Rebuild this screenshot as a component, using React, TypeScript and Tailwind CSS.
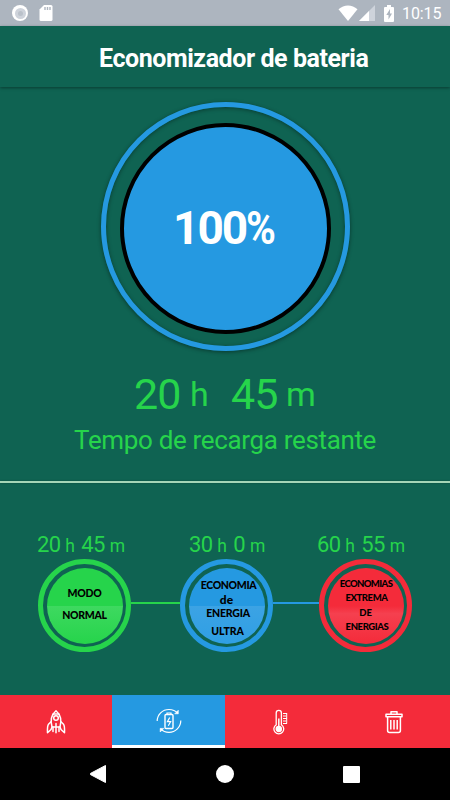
import React from 'react';

type Line = { text: string; cls: string };

function Duration({ h, m, cls }: { h: string; m: string; cls: string }) {
  return (
    <div className={`flex h-[26px] items-baseline whitespace-nowrap text-[22px] leading-[26px] tracking-[-0.7px] text-[#26d44b] ${cls}`}>
      <span>{h}</span>
      <span className="ml-[5px] text-[17.500px]">h</span>
      <span className="ml-[7px]">{m}</span>
      <span className="ml-[5px] text-[17.500px]">m</span>
    </div>
  );
}

function Mode({ ring, disc, lines }: { ring: string; disc: string; lines: Line[] }) {
  return (
    <div className={`flex size-[93px] shrink-0 items-center justify-center rounded-full border-[5px] ${ring}`}>
      <div className={`flex size-[76px] shrink-0 flex-col items-center rounded-full font-[Lato,sans-serif] font-black text-black ${disc}`}>
        {lines.map((l) => (
          <span key={l.text} className={`whitespace-nowrap ${l.cls}`}>{l.text}</span>
        ))}
      </div>
    </div>
  );
}

function Rocket() {
  return (
    <svg width="20" height="26" viewBox="0 0 20 26" fill="none" stroke="#fff" strokeWidth="1.500" strokeLinejoin="round" strokeLinecap="round">
      <path d="M6 18C4.200 11.500 5.400 5.600 10 1.700c4.600 3.900 5.800 9.800 4 16.300Z" />
      <path d="M7.200 5h5.600" />
      <circle cx="10" cy="9" r="2.300" />
      <path d="M5 12.800 2.500 15.200C1.500 16.300 1.300 19 1.500 23.800L5 20.500 6 18M15 12.800l2.500 2.400c1 1.100 1.200 3.800 1 8.600L15 20.500 14 18" />
      <path d="M7 18v4.500M13 18v4.500M10 14.500v9.300" />
    </svg>
  );
}

function Recharge() {
  return (
    <svg width="26" height="26" viewBox="0 0 26 26" fill="none" stroke="#fff" strokeWidth="1.200">
      <path d="M1.200 13C1.200 6.500 6.500 1.500 13 1.500c3.600 0 6.500 1.200 8.800 3.800M24.800 12.500c0 6.500-5.300 11.900-11.800 11.900-3.500 0-6.300-1.300-8.500-3.700" />
      <path d="M22.300 2.200v3.600h-3.600ZM4.200 24v-3.600h3.600Z" fill="#fff" strokeWidth=".6" />
      <rect x="9" y="6.500" width="8" height="14" rx="1" strokeWidth="1.400" />
      <path d="M11 6V5h4v1" />
      <path d="M13.700 9.500l-2.300 4.200h3.200l-2.300 4" />
    </svg>
  );
}

function Thermometer() {
  return (
    <svg width="16" height="26" viewBox="0 0 16 26" fill="none" stroke="#fff" strokeWidth="1.300">
      <path d="M3.200 15.800V4a2.600 2.600 0 0 1 5.200 0v11.800a4.900 4.900 0 1 1-5.200 0Z" />
      <path d="M5.800 9.500V18" strokeWidth="1.500" />
      <circle cx="5.800" cy="20" r="2.600" fill="#fff" />
      <path d="M10 4.500h4M10 7h3M10 9.500h4M10 12h3M10 14.500h4M13.700 4v10.500" strokeWidth="1" />
    </svg>
  );
}

function Trash() {
  return (
    <svg width="18" height="24" viewBox="0 0 18 24" fill="none" stroke="#fff" strokeWidth="1.500" strokeLinejoin="round">
      <path d="M6 4V1.800h6V4M1 4.200h16v2.600H1ZM2.600 7v13.500c0 1.300.7 2 2 2h8.800c1.300 0 2-.7 2-2V7M5.800 10v9.500M9 10v9.500M12.200 10v9.500" />
    </svg>
  );
}

export default function App() {
  return (
    <div className="flex h-[800px] w-[450px] flex-col overflow-hidden bg-[#0f6352] font-[Roboto,sans-serif]">
      <div className="flex h-[26px] shrink-0 items-center bg-[#adb5bf] pl-3 text-white">
        <span className="flex size-4 items-center justify-center rounded-full bg-white">
          <span className="flex size-[11px] items-center justify-center rounded-full bg-[#ced3db]">
            <span className="size-[5px] rounded-full bg-[#bac1ca]" />
          </span>
        </span>
        <svg className="ml-[11px]" width="14" height="16" viewBox="0 0 14 16">
          <path d="M5 0h7a1.500 1.500 0 0 1 1.500 1.500v13A1.500 1.500 0 0 1 12 16H2a1.500 1.500 0 0 1-1.500-1.500V4.500Z" fill="#fff" />
          <path d="M6 2v3M8.500 2v3M11 2v3" stroke="#adb5bf" strokeWidth="1.400" />
        </svg>
        <svg className="ml-[285px]" width="20" height="16" viewBox="0 0 20 16">
          <path d="M.5 4.200C6-.9 14-.9 19.500 4.200L10 16Z" fill="#fff" />
        </svg>
        <svg className="ml-[1px]" width="16" height="16" viewBox="0 0 16 16">
          <path d="M16 0v16H0Z" fill="#ced3db" />
          <path d="M10 6v10H0Z" fill="#fff" />
        </svg>
        <svg className="ml-2" width="12" height="17" viewBox="0 0 12 17">
          <path d="M4 0h4v2h2a1 1 0 0 1 1 1v13a1 1 0 0 1-1 1H2a1 1 0 0 1-1-1V3a1 1 0 0 1 1-1h2Z" fill="#fff" />
          <path d="M7 4 3.300 10H5.500v4.500L9 8.500H7Z" fill="#adb5bf" />
        </svg>
        <span className="ml-[7px] pt-[2px] text-[16px] leading-5 tracking-[-0.1px]">10:15</span>
      </div>

      <header className="flex h-[61px] shrink-0 items-center pl-[99px] pt-[4px] shadow-[0_1px_3px_rgba(0,0,0,0.4)]">
        <h1 className="whitespace-nowrap text-[25px] font-bold leading-7 tracking-[-0.43px] text-white">Economizador de bateria</h1>
      </header>

      <div className="ml-[101px] mt-[15px] flex size-[249px] shrink-0 items-center justify-center rounded-full border-[5px] border-[#2599e1] pt-[3px] shadow-[0_1px_4px_rgba(0,0,0,0.45),inset_0_1px_4px_rgba(0,0,0,0.4)]">
        <div className="mr-[1px] flex size-[211px] items-center justify-center rounded-full border-4 border-black bg-[#2599e1]">
          <span className="flex w-[104px] whitespace-nowrap text-[46px] font-bold leading-[54px] tracking-[-2px] text-white">
            100<span className="inline-block origin-left scale-x-[0.88]">%</span>
          </span>
        </div>
      </div>

      <div className="mt-[17px] flex h-[52px] shrink-0 items-end whitespace-nowrap pl-[134px] text-[43px] leading-[52px] tracking-[-1px] text-[#26d44b]">
        <span className="w-[56px]">20</span>
        <span className="w-[41px] text-[34px]">h</span>
        <span className="w-[55px]">45</span>
        <span className="text-[34px]">m</span>
      </div>
      <p className="mt-[5px] h-[30px] shrink-0 whitespace-nowrap pl-[74px] text-[26px] leading-[30px] tracking-[-0.340px] text-[#26d44b]">Tempo de recarga restante</p>

      <div className="mt-[26px] h-[2px] shrink-0 bg-[#a5d5b7] shadow-[0_0_2px_rgba(0,0,0,0.3)]" />

      <div className="mt-[49px] grid shrink-0 grid-cols-[142px_138px_100px] pl-[37px]">
        <Duration h="20" m="45" cls="" />
        <Duration h="30" m="0" cls="pl-[10px]" />
        <Duration h="60" m="55" cls="" />
      </div>
      <div className="mt-[1px] flex shrink-0 items-center pl-[38px]">
        <Mode
          ring="border-[#26d44b]"
          disc="bg-[linear-gradient(#26d44b_50%,#3ed960_50%,#26d44b)] pt-[18px]"
          lines={[
            { text: 'MODO', cls: 'text-[10.500px] leading-[14px] tracking-[-0.2px]' },
            { text: 'NORMAL', cls: 'mt-2 text-[10.500px] leading-[14px] tracking-[-0.3px]' },
          ]}
        />
        <div className="mb-[5px] h-[2px] w-[49px] bg-[#26d44b]" />
        <Mode
          ring="border-[#2599e1]"
          disc="bg-[linear-gradient(#2599e1_50%,#3ca3e4_50%,#2f9fe4)] pt-[11px]"
          lines={[
            { text: 'ECONOMIA', cls: 'text-[10.500px] leading-[12px] tracking-[-0.35px] pl-[4px]' },
            { text: 'de', cls: 'mt-[3px] text-[12px] leading-[12px]' },
            { text: 'ENERGIA', cls: 'mt-[1px] text-[10.500px] leading-[12px] tracking-[-0.2px] pl-[3px]' },
            { text: 'ULTRA', cls: 'mt-[6px] text-[10.500px] leading-[12px] tracking-[-0.1px] pl-[2px]' },
          ]}
        />
        <div className="mb-[5px] h-[2px] w-[46px] bg-[#2599e1]" />
        <Mode
          ring="border-[#f42b3a]"
          disc="bg-[linear-gradient(#f42b3a_50%,#f5404f_60%,#f42b3a)] pt-[10px]"
          lines={[
            { text: 'ECONOMIAS', cls: 'text-[9.500px] leading-[12px] tracking-[-0.6px] pl-[1px]' },
            { text: 'EXTREMA', cls: 'mt-[2px] text-[9.500px] leading-[12px] tracking-[-0.400px] pl-[2px]' },
            { text: 'DE', cls: 'mt-[3px] text-[9.500px] leading-[12px]' },
            { text: 'ENERGIAS', cls: 'mt-[2px] text-[9.500px] leading-[12px] tracking-[-0.400px] pl-[3px]' },
          ]}
        />
      </div>

      <nav className="mt-auto grid h-[53px] shrink-0 grid-cols-[112px_113px_112px_113px] bg-[#f42b3a]">
        <button className="flex items-center justify-center"><Rocket /></button>
        <button className="flex items-center justify-center border-b-[3px] border-white bg-[#2599e1] pt-[2px]"><Recharge /></button>
        <button className="flex items-center justify-center"><Thermometer /></button>
        <button className="flex items-center justify-center"><Trash /></button>
      </nav>
      <div className="flex h-[52px] shrink-0 items-center bg-black pl-[90px]">
        <svg width="16" height="18" viewBox="0 0 16 18"><path d="M15.500.5v17L.5 9.600V8.400Z" fill="#fff" stroke="#fff" strokeLinejoin="round" /></svg>
        <span className="ml-[110px] size-[18px] rounded-full bg-white" />
        <span className="ml-[109px] size-[17px] rounded-[1px] bg-white" />
      </div>
    </div>
  );
}
